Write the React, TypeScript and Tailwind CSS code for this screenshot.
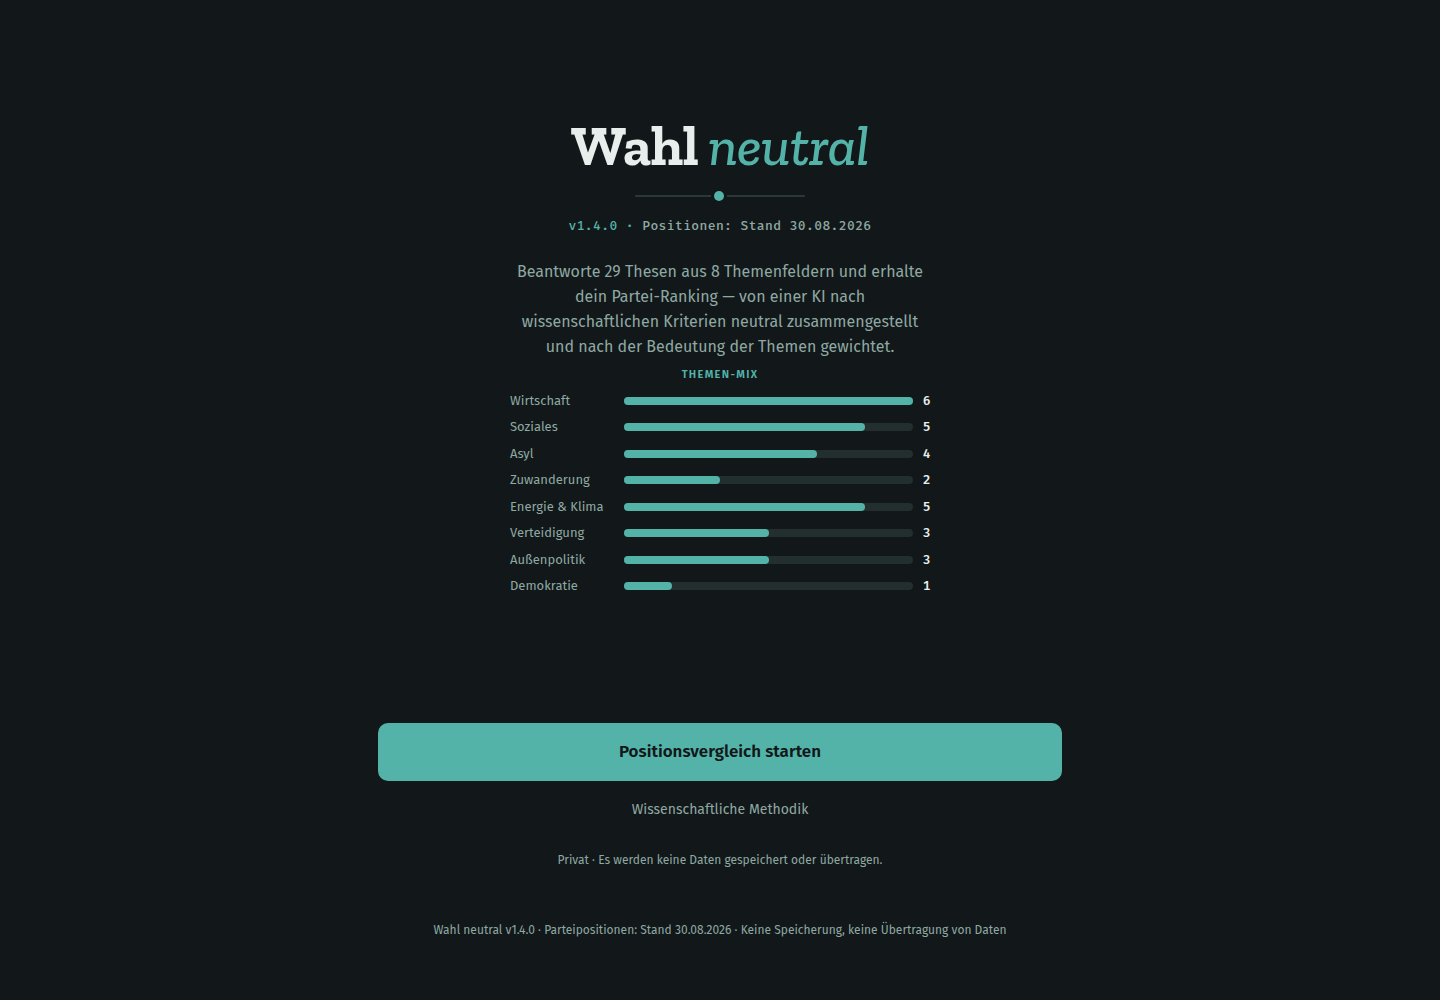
import React from "react";

const VERSION = "v1.4.0";
const AS_OF = "30.08.2026";

const TOPICS = [
  { name: "Wirtschaft", count: 6 },
  { name: "Soziales", count: 5 },
  { name: "Asyl", count: 4 },
  { name: "Zuwanderung", count: 2 },
  { name: "Energie & Klima", count: 5 },
  { name: "Verteidigung", count: 3 },
  { name: "Außenpolitik", count: 3 },
  { name: "Demokratie", count: 1 },
];

const MAX_COUNT = Math.max(...TOPICS.map(({ count }) => count));

export default function App() {
  return (
    <div className="flex min-h-screen flex-col items-center bg-[#121819] px-4 pt-[118px] pb-14 font-['Fira_Sans','Noto_Sans',sans-serif] text-[#8fa8a3]">
      <main className="flex w-full max-w-[684px] flex-col items-center text-center">
        <Header />
        <p className="mt-[23px] max-w-[420px] text-base leading-[25px]">
          Beantworte 29 Thesen aus 8 Themenfeldern und erhalte dein
          Partei-Ranking — von einer KI nach wissenschaftlichen Kriterien
          neutral zusammengestellt und nach der Bedeutung der Themen gewichtet.
        </p>
        <TopicMix />
        <Actions />
      </main>
      <footer className="mt-[50px] text-center text-xs leading-5">
        Wahl neutral {VERSION} · Parteipositionen: Stand {AS_OF} · Keine
        Speicherung, keine Übertragung von Daten
      </footer>
    </div>
  );
}

function Header() {
  return (
    <header className="flex flex-col items-center">
      <h1 className="font-['Zilla_Slab','DejaVu_Serif_Condensed','DejaVu_Serif',serif] text-[56px] leading-[56px] font-bold tracking-[-0.01em] text-[#e8eeec]">
        Wahl{" "}
        <em className="font-medium text-[#54b3a9]">neutral</em>
      </h1>
      <div className="mt-[17px] flex items-center gap-[3px]">
        <span className="h-0.5 w-[76px] rounded-l-full bg-[#2b3838]" />
        <span className="size-2.5 rounded-full bg-[#54b3a9]" />
        <span className="h-0.5 w-[78px] rounded-r-full bg-[#2b3838]" />
      </div>
      <p className="mt-[15px] font-['Fira_Mono','DejaVu_Sans_Mono',monospace] text-[13px] leading-5 font-medium tracking-[0.03em]">
        <span className="text-[#54b3a9]">{VERSION} ·</span> Positionen: Stand{" "}
        {AS_OF}
      </p>
    </header>
  );
}

function TopicMix() {
  return (
    <section className="mt-2 w-full max-w-[420px]">
      <h2 className="text-[11px] leading-4 font-semibold tracking-[0.12em] text-[#54b3a9] uppercase">
        Themen-Mix
      </h2>
      <ul className="mt-[9px] flex h-[203px] flex-col justify-between">
        {TOPICS.map(({ name, count }) => (
          <li
            key={name}
            className="flex items-center gap-2.5 text-left text-[13px] leading-[18px]"
          >
            <span className="w-[104px]">{name}</span>
            <span className="h-2 flex-1 rounded-full bg-[#232f2f]">
              <span
                className="block h-full rounded-full bg-[#54b3a9]"
                style={{ width: `${(count / MAX_COUNT) * 100}%` }}
              />
            </span>
            <span className="w-[7px] font-medium text-[#e8eeec] tabular-nums">
              {count}
            </span>
          </li>
        ))}
      </ul>
    </section>
  );
}

function Actions() {
  return (
    <div className="mt-32 flex w-full flex-col items-center">
      <button
        type="button"
        className="h-[58px] w-full cursor-pointer rounded-[10px] bg-[#54b3a9] text-[17px] font-semibold text-[#121819]"
      >
        Positionsvergleich starten
      </button>
      <button
        type="button"
        className="mt-[19px] cursor-pointer text-sm leading-5"
      >
        Wissenschaftliche Methodik
      </button>
      <p className="mt-[30px] text-xs leading-5">
        Privat · Es werden keine Daten gespeichert oder übertragen.
      </p>
    </div>
  );
}
